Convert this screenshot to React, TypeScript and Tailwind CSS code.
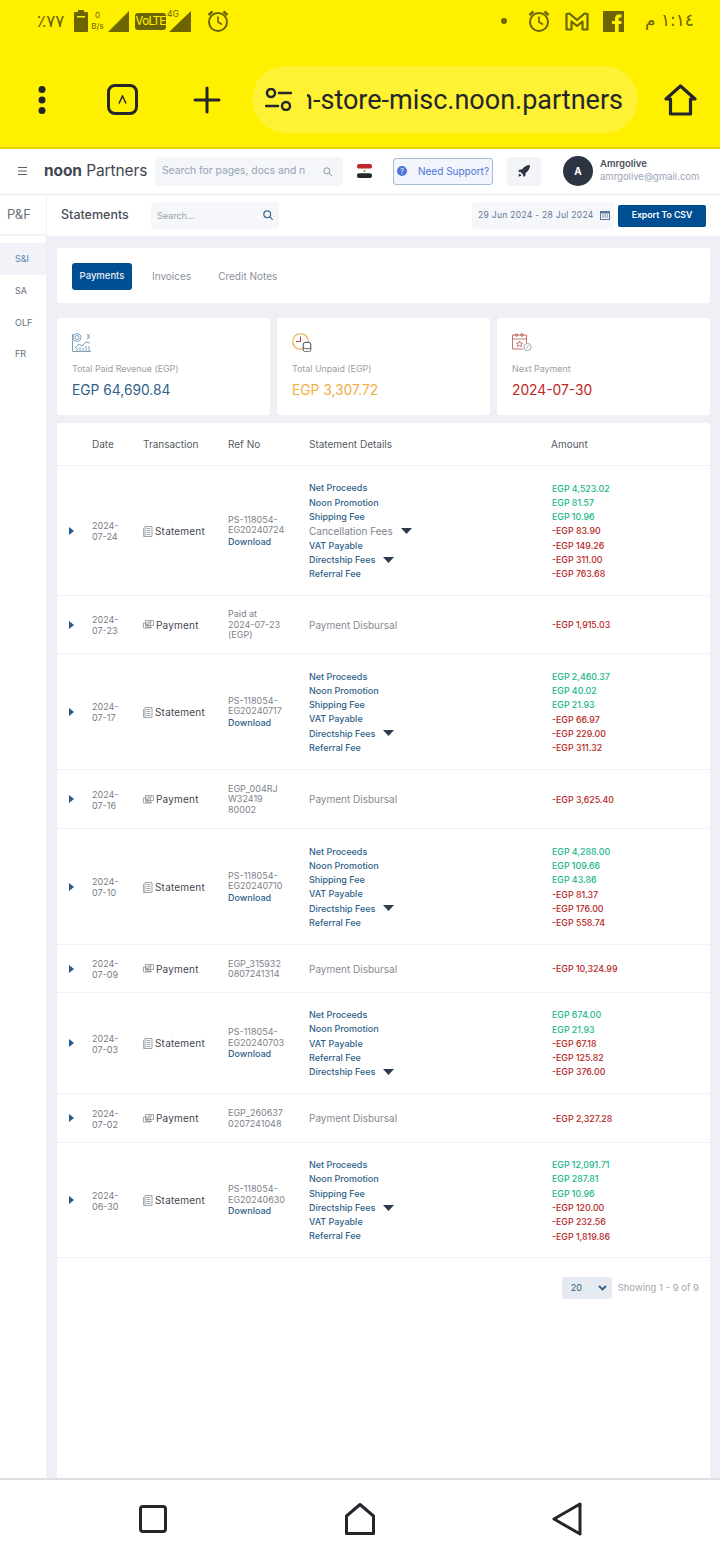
import React from 'react';

type Row = {
  date: [string, string];
  kind: 'Statement' | 'Payment';
  ref: string[];
  download?: boolean;
  details?: [string, boolean?, boolean?][];
  amounts: string[];
  h: string;
};

const rows: Row[] = [
  { date: ['2024-', '07-24'], kind: 'Statement', ref: ['PS-118054-', 'EG20240724'], download: true, h: 'h-[130px]',
    details: [['Net Proceeds'], ['Noon Promotion'], ['Shipping Fee'], ['Cancellation Fees', true, true], ['VAT Payable'], ['Directship Fees', true], ['Referral Fee']],
    amounts: ['EGP 4,523.02', 'EGP 81.57', 'EGP 10.96', '-EGP 83.90', '-EGP 149.26', '-EGP 311.00', '-EGP 763.68'] },
  { date: ['2024-', '07-23'], kind: 'Payment', ref: ['Paid at', '2024-07-23', '(EGP)'], h: 'h-[58px]', amounts: ['-EGP 1,915.03'] },
  { date: ['2024-', '07-17'], kind: 'Statement', ref: ['PS-118054-', 'EG20240717'], download: true, h: 'h-[116px]',
    details: [['Net Proceeds'], ['Noon Promotion'], ['Shipping Fee'], ['VAT Payable'], ['Directship Fees', true], ['Referral Fee']],
    amounts: ['EGP 2,460.37', 'EGP 40.02', 'EGP 21.93', '-EGP 66.97', '-EGP 229.00', '-EGP 311.32'] },
  { date: ['2024-', '07-16'], kind: 'Payment', ref: ['EGP_004RJ', 'W32419', '80002'], h: 'h-[59px]', amounts: ['-EGP 3,625.40'] },
  { date: ['2024-', '07-10'], kind: 'Statement', ref: ['PS-118054-', 'EG20240710'], download: true, h: 'h-[116px]',
    details: [['Net Proceeds'], ['Noon Promotion'], ['Shipping Fee'], ['VAT Payable'], ['Directship Fees', true], ['Referral Fee']],
    amounts: ['EGP 4,288.00', 'EGP 109.66', 'EGP 43.86', '-EGP 81.37', '-EGP 176.00', '-EGP 558.74'] },
  { date: ['2024-', '07-09'], kind: 'Payment', ref: ['EGP_315932', '0807241314'], h: 'h-[48px]', amounts: ['-EGP 10,324.99'] },
  { date: ['2024-', '07-03'], kind: 'Statement', ref: ['PS-118054-', 'EG20240703'], download: true, h: 'h-[101px]',
    details: [['Net Proceeds'], ['Noon Promotion'], ['VAT Payable'], ['Referral Fee'], ['Directship Fees', true]],
    amounts: ['EGP 674.00', 'EGP 21.93', '-EGP 67.18', '-EGP 125.82', '-EGP 376.00'] },
  { date: ['2024-', '07-02'], kind: 'Payment', ref: ['EGP_260637', '0207241048'], h: 'h-[49px]', amounts: ['-EGP 2,327.28'] },
  { date: ['2024-', '06-30'], kind: 'Statement', ref: ['PS-118054-', 'EG20240630'], download: true, h: 'h-[115px]',
    details: [['Net Proceeds'], ['Noon Promotion'], ['Shipping Fee'], ['Directship Fees', true], ['VAT Payable'], ['Referral Fee']],
    amounts: ['EGP 12,091.71', 'EGP 287.81', 'EGP 10.96', '-EGP 120.00', '-EGP 232.56', '-EGP 1,819.86'] },
];

const Caret = () => (
  <svg width="11" height="6" viewBox="0 0 11 6"><path d="M0 0h11L5.5 6z" fill="#2f3a4a" /></svg>
);

const Alarm = () => (
  <svg width="22" height="23" viewBox="0 0 22 23" fill="none" stroke="#6b6400" strokeWidth="2">
    <circle cx="11" cy="13" r="9" />
    <path d="M11 7.500V13l4 2.500" strokeWidth="1.600" />
    <path d="M1.500 6l4-3.500M20.500 6l-4-3.500" strokeWidth="2.400" />
  </svg>
);

const StatementIcon = () => (
  <svg width="10" height="11" viewBox="0 0 10 11" fill="none" stroke="#8a8f98" strokeWidth="0.8">
    <path d="M2 .5h7v10H2zM.6 2v8.500H2M3.500 2.500h4M3.500 4.500h4M3.500 6.500h4M3.500 8.500h4" />
  </svg>
);
const PaymentIcon = () => (
  <svg width="11" height="10" viewBox="0 0 11 10" fill="none" stroke="#8a8f98" strokeWidth="0.8">
    <path d="M2.500.5h8v5h-8zM.5 3h7v5h-7zM2 4.600h4M2 6.200h4M5 2h4M9 7.500H3" />
  </svg>
);

function TableRow({ r }: { r: Row }) {
  return (
    <div className={`grid grid-cols-[35px_51px_85px_81px_242px_1fr] items-center border-b border-[#f1f2f5] pt-[1px] ${r.h}`}>
      <div className="-mt-[1px] pl-[12px]">
        <svg width="5" height="8" viewBox="0 0 5 8"><path d="M0 0l5 4-5 4z" fill="#235a88" /></svg>
      </div>
      <div className="text-[9px] leading-[11px] text-[#767c85]">{r.date[0]}<br />{r.date[1]}</div>
      <div className="flex items-center gap-[2px] text-[10px] tracking-[0.2px] text-[#3f4650]">
        {r.kind === 'Statement' ? <StatementIcon /> : <PaymentIcon />}
        <span>{r.kind}</span>
      </div>
      <div className="text-[9px] leading-[10.500px] text-[#7d838c]">
        {r.ref.map((l) => <div key={l}>{l}</div>)}
        {r.download && <div className="mt-[1px] font-medium text-[#2f5f88]">Download</div>}
      </div>
      <div>
        {r.details ? (
          r.details.map(([t, caret, plain]) => (
            <div key={t} className={`flex h-[14.300px] items-center gap-[8px] ${plain ? 'text-[10px] text-[#7d838c]' : 'text-[9px] font-medium text-[#2f5f88]'}`}>
              <span>{t}</span>
              {caret && <Caret />}
            </div>
          ))
        ) : (
          <div className="text-[10px] text-[#858a92]">Payment Disbursal</div>
        )}
      </div>
      <div>
        {r.amounts.map((a, i) => (
          <div key={i} className={`flex h-[14.300px] items-center pl-[1px] text-[8.800px] font-medium ${a.startsWith('-') ? 'text-[#b3261e]' : 'text-[#16b58a]'}`}>{a}</div>
        ))}
      </div>
    </div>
  );
}

export default function App() {
  return (
    <div className="flex h-[1560px] w-[720px] flex-col overflow-hidden bg-white font-['Inter','Noto_Sans',sans-serif]">
      {/* Android + browser chrome */}
      <div className="flex h-[149px] shrink-0 flex-col border-b-2 border-[#e3d600] bg-[#fff000]">
        <div className="flex h-[42px] items-center pl-[37px] pr-[26px] text-[#6b6400]">
          <span className="w-[37px] font-['DejaVu_Sans',sans-serif] text-[17px] leading-none">٪٧٧</span>
          <svg width="14" height="22" viewBox="0 0 14 22"><path d="M4 0h6v2h3a1 1 0 011 1v18a1 1 0 01-1 1H1a1 1 0 01-1-1V3a1 1 0 011-1h3z" fill="#6b6400" /><rect x="3" y="6" width="8" height="1.500" fill="#fff000" /></svg>
          <div className="ml-[2px] w-[15px] text-center text-[8px] leading-[11px]">0<br />B/s</div>
          <svg className="ml-[3px]" width="21" height="21" viewBox="0 0 21 21"><path d="M21 0v21H0z" fill="#6b6400" /></svg>
          <div className="ml-[6px] h-[17px] w-[31px] overflow-hidden rounded-[3px] bg-[#6b6400] text-center font-['Roboto',sans-serif] text-[12px] tracking-[-0.6px] leading-[17px] text-[#fff000]">VoLTE</div>
          <svg className="ml-[3px]" width="22" height="21" viewBox="0 0 22 21"><path d="M22 0v21H0z" fill="#6b6400" /></svg>
          <span className="-ml-[24px] -mt-[13px] w-[13px] text-[8.500px]">4G</span>
          <span className="ml-[27px] -mt-[2px]"><Alarm /></span>
          <div className="flex-1" />
          <span className="h-[6px] w-[6px] rounded-full bg-[#6b6400]" />
          <span className="ml-[21px] -mt-[2px]"><Alarm /></span>
          <svg className="ml-[15px]" width="24" height="19" viewBox="0 0 24 19" fill="none" stroke="#6b6400" strokeWidth="2.200" strokeLinejoin="round"><path d="M1.500 17.500V2l3-.5L12 8l7.500-6.500 3 .5v15.500h-5V9.500L12 14 6.500 9.500v8z" /></svg>
          <span className="ml-[14px] flex h-[21px] w-[21px] items-end justify-end bg-[#6b6400]">
            <svg width="14" height="19" viewBox="0 0 14 19"><path d="M5 19v-8H2V8h3V5.500C5 3 6.500 1.500 9 1.500h2.500v3H10c-1 0-1.300.5-1.300 1.300V8h3l-.4 3H8.700v8z" fill="#fff000" /></svg>
          </span>
          <span dir="rtl" className="ml-[21px] font-['DejaVu_Sans',sans-serif] text-[17px] tracking-[1px]">١:١٤ م</span>
        </div>
        <div className="flex flex-1 items-center pt-[10px]">
          <svg className="ml-[36px]" width="12" height="30" viewBox="0 0 12 30" fill="#23272b"><circle cx="6" cy="4.500" r="3.500" /><circle cx="6" cy="15" r="3.500" /><circle cx="6" cy="25.500" r="3.500" /></svg>
          <div className="ml-[59px] flex h-[31px] w-[31px] items-center justify-center rounded-[8px] border-[3px] border-[#23272b]">
            <svg width="9" height="9" viewBox="0 0 9 9" fill="none" stroke="#23272b" strokeWidth="1.500"><path d="M1 8.500L4.500 1 8 8.500" /></svg>
          </div>
          <svg className="ml-[55px]" width="28" height="28" viewBox="0 0 28 28" stroke="#23272b" strokeWidth="3" strokeLinecap="round"><path d="M14 2v24M2 14h24" /></svg>
          <div className="ml-[31px] flex h-[67px] w-[386px] items-center rounded-full bg-[#fff133] pl-[13px] pr-[15px]">
            <svg className="shrink-0" width="27" height="23" viewBox="0 0 27 23" fill="none" stroke="#23272b" strokeWidth="2.500" strokeLinecap="round"><circle cx="6" cy="5" r="4" /><path d="M14 5h12M1 18h12" /><circle cx="21" cy="18" r="4" /></svg>
            <div className="ml-[15px] flex flex-1 justify-end overflow-hidden whitespace-nowrap font-['Roboto',sans-serif] text-[27px] leading-[40px] text-[#23272b]">on-store-misc.noon.partners</div>
          </div>
          <svg className="ml-[26px]" width="33" height="32" viewBox="0 0 33 32" fill="none" stroke="#23272b" strokeWidth="3.200" strokeLinejoin="round"><path d="M2 15L16.500 2 31 15h-4.500v15h-20V15z" /></svg>
        </div>
      </div>

      {/* Site header */}
      <div className="flex h-[46px] shrink-0 items-center border-b border-[#e9ebf1] pb-[1px]">
        <svg className="ml-[18px]" width="9" height="8" viewBox="0 0 9 8" stroke="#5a6068"><path d="M0 .5h9M0 4h9M0 7.500h9" /></svg>
        <div className="ml-[17px] w-[104px] whitespace-nowrap text-[15.500px] tracking-[-0.1px] text-[#3f4650]"><span className="font-bold">noon</span> Partners</div>
        <div className="ml-[7px] flex h-[29px] w-[188px] items-center justify-between rounded-[4px] bg-[#f4f6fa] pl-[7px] pr-[11px]">
          <span className="w-[148px] overflow-hidden whitespace-nowrap text-[10.300px] text-[#95a3b5]">Search for pages, docs and n</span>
          <svg width="9" height="9" viewBox="0 0 9 9" fill="none" stroke="#8b97a7"><circle cx="3.800" cy="3.800" r="3" /><path d="M6 6l3 3" /></svg>
        </div>
        <svg className="ml-[14px]" width="15" height="14" viewBox="0 0 15 14"><rect width="15" height="4.700" rx="2" fill="#c0272d" /><rect y="4.700" width="15" height="4.600" fill="#fff" /><rect y="9.300" width="15" height="4.700" rx="2" fill="#23272b" /><circle cx="7.500" cy="7" r="1" fill="#b08a2e" /></svg>
        <div className="ml-[21px] flex h-[27px] w-[100px] items-center rounded-[3px] border border-[#a4bcd6] bg-[#f2f5fb] pl-[3px]">
          <span className="flex h-[10px] w-[10px] items-center justify-center rounded-full bg-[#4c74d9] text-[7px] leading-none text-white">?</span>
          <span className="ml-[11px] whitespace-nowrap text-[10px] text-[#4c74d9]">Need Support?</span>
        </div>
        <div className="ml-[14px] flex h-[29px] w-[34px] items-center justify-center rounded-[3px] bg-[#f2f4f8]">
          <svg width="12" height="12" viewBox="0 0 12 12" fill="#2f3540"><path d="M12 0C8.500 0 6 1.500 4 4.500H1.500L0 6.500l2.500.5L5 9.500l.5 2.500 2-1.500V8C10.500 6 12 3.500 12 0zM1.500 8.500C.800 9.500.500 11 .500 11.500c.5 0 2-.3 3-1z" /></svg>
        </div>
        <div className="ml-[22px] flex h-[30px] w-[30px] items-center justify-center rounded-full bg-[#2c3444] text-[10px] font-bold text-white">A</div>
        <div className="ml-[7px] -mt-[1px] leading-none">
          <div className="text-[9.500px] font-semibold leading-[12px] text-[#4a505a]">Amrgolive</div>
          <div className="text-[9.500px] leading-[14px] text-[#9aa5b5]">amrgolive@gmail.com</div>
        </div>
      </div>

      <div className="flex min-h-0 flex-1">
        {/* Sidebar */}
        <div className="w-[47px] shrink-0 border-r border-[#eef0f5] bg-white">
          <div className="flex h-[41px] items-center border-b-[2px] border-[#f1f3f7] pl-[7px] text-[13px] text-[#6a7079]">P&amp;F</div>
          <div className="mt-[7px] flex h-[32px] items-center bg-[#f1f3f8] pl-[15px] text-[9px] text-[#5e86a8]">S&amp;I</div>
          <div className="flex h-[32px] items-center pl-[15px] text-[9px] text-[#6a7079]">SA</div>
          <div className="flex h-[32px] items-center pl-[15px] text-[9px] text-[#6a7079]">OLF</div>
          <div className="flex h-[30px] items-center pl-[15px] text-[9px] text-[#6a7079]">FR</div>
        </div>

        {/* Content */}
        <div className="flex min-w-0 flex-1 flex-col bg-[#eef0f6]">
          <div className="flex h-[41px] shrink-0 items-center bg-white pl-[14px]">
            <div className="w-[90px] text-[12.500px] font-medium text-[#4a505a]">Statements</div>
            <div className="flex h-[27px] w-[128px] items-center justify-between rounded-[4px] bg-[#f6f7fb] pl-[6px] pr-[6px]">
              <span className="text-[9px] text-[#9aa2ad]">Search...</span>
              <svg className="-mt-[1px]" width="10" height="10" viewBox="0 0 10 10" fill="none" stroke="#3d6a93" strokeWidth="1.200"><circle cx="4.200" cy="4.200" r="3.400" /><path d="M6.800 6.800L9.700 9.700" /></svg>
            </div>
            <div className="ml-[193px] flex h-[27px] w-[142px] items-center justify-between rounded-[4px] bg-[#f6f7fb] pl-[6px] pr-[4px]">
              <span className="whitespace-nowrap text-[8.500px] tracking-[0.3px] text-[#5b7793]">29 Jun 2024 - 28 Jul 2024</span>
              <svg className="-mt-[1px]" width="10" height="10" viewBox="0 0 10 10" fill="#5b7793"><path d="M0 1h10v9H0zM1 3.500v5.500h8V3.500z" fillRule="evenodd" /><path d="M2 4.500h1.500v1H2zM4.300 4.500h1.500v1H4.300zM6.500 4.500H8v1H6.500zM2 6.500h1.500v1H2zM4.300 6.500h1.500v1H4.300zM6.500 6.500H8v1H6.500z" /></svg>
            </div>
            <div className="ml-[4px] flex h-[22px] w-[88px] items-center justify-center rounded-[2px] bg-[#004e92] text-[8.700px] font-semibold text-white">Export To CSV</div>
          </div>

          <div className="flex min-h-0 flex-1 flex-col px-[10px] pt-[12px]">
            {/* Tabs */}
            <div className="flex h-[55px] shrink-0 items-center rounded-[3px] bg-white pl-[15px] pt-[1px]">
              <div className="flex h-[27px] w-[60px] items-center justify-center rounded-[3px] bg-[#004e92] pt-[1px] text-[9.500px] font-medium text-[#e8eef5]">Payments</div>
              <div className="ml-[20px] pt-[1px] text-[10px] text-[#8d929a]">Invoices</div>
              <div className="ml-[27px] pt-[1px] text-[10px] text-[#8d929a]">Credit Notes</div>
            </div>

            {/* Stats */}
            <div className="mt-[15px] grid h-[97px] shrink-0 grid-cols-3 gap-[7px]">
              <div className="rounded-[3px] bg-white pl-[15px] pt-[15px]">
                <svg width="20" height="19" viewBox="0 0 20 19" fill="none" stroke="#5f8aa8" strokeWidth="0.800"><circle cx="5" cy="4.500" r="4" /><circle cx="5" cy="4.500" r="2" /><path d="M.5 1v17.500H19" /><path d="M3 15l4-4 3 2 4-4 4 1" /><path d="M5 18v-3M8 18v-4M11 18v-3M14 18v-5M17 18v-5" /><path d="M15 1l2 2.500-2 2.500M18 1l-2 2.500 2 2.500" /></svg>
                <div className="mt-[10px] text-[8.900px] leading-[14px] text-[#9a9ea5]">Total Paid Revenue (EGP)</div>
                <div className="mt-[4px] text-[13.800px] leading-[20px] text-[#2f5f88]">EGP 64,690.84</div>
              </div>
              <div className="rounded-[3px] bg-white pl-[15px] pt-[15px]">
                <svg width="20" height="19" viewBox="0 0 20 19" fill="none"><circle cx="8.500" cy="8.500" r="7.800" stroke="#e9a93a" strokeWidth="1.100" /><path d="M8.500 3.500v5H4" stroke="#c0392b" strokeWidth="1" /><ellipse cx="15" cy="11" rx="3.800" ry="1.800" fill="#fff" stroke="#4a505a" /><path d="M11.200 11v6c0 1 1.700 1.800 3.800 1.800s3.800-.8 3.800-1.800v-6M11.200 14c0 1 1.700 1.800 3.800 1.800s3.800-.8 3.800-1.800" fill="#fff" stroke="#4a505a" /></svg>
                <div className="mt-[10px] text-[8.900px] leading-[14px] text-[#9a9ea5]">Total Unpaid (EGP)</div>
                <div className="mt-[4px] text-[13.800px] leading-[20px] text-[#efb040]">EGP 3,307.72</div>
              </div>
              <div className="rounded-[3px] bg-white pl-[15px] pt-[15px]">
                <svg width="20" height="19" viewBox="0 0 20 19" fill="none" stroke="#b4534a" strokeWidth="0.800"><path d="M11 16H.5V2h14v8M.5 6h14" /><circle cx="4.500" cy="2" r="1.300" /><circle cx="10" cy="2" r="1.300" /><path d="M7.500 8l1 2 2 .2-1.500 1.300.5 2-2-1-2 1 .5-2-1.500-1.300 2-.2z" /><circle cx="15.500" cy="14" r="3.600" stroke="#8a8f98" /><path d="M14.500 15.500l2-3" stroke="#8a8f98" /></svg>
                <div className="mt-[10px] text-[8.900px] leading-[14px] text-[#9a9ea5]">Next Payment</div>
                <div className="mt-[4px] text-[13.800px] leading-[20px] text-[#c0261f]">2024-07-30</div>
              </div>
            </div>

            {/* Table */}
            <div className="mt-[8px] min-h-0 flex-1 rounded-t-[3px] bg-white">
              <div className="grid h-[43px] grid-cols-[35px_51px_85px_81px_242px_1fr] items-center border-b border-[#f1f2f5] text-[10px] text-[#555b64]">
                <div />
                <div>Date</div>
                <div>Transaction</div>
                <div>Ref No</div>
                <div>Statement Details</div>
                <div>Amount</div>
              </div>
              {rows.map((r) => <TableRow key={r.date[1]} r={r} />)}
              <div className="flex items-center justify-end pr-[11px] pt-[19px]">
                <div className="flex h-[22px] w-[50px] items-center justify-between rounded-[3px] bg-[#e4eaf0] pl-[9px] pr-[5px] text-[9px] text-[#2f5f88]">
                  <span>20</span>
                  <svg width="9" height="6" viewBox="0 0 9 6" fill="none" stroke="#2f5f88" strokeWidth="1.800"><path d="M1 1l3.500 3.500L8 1" /></svg>
                </div>
                <div className="ml-[6px] whitespace-nowrap text-[9.500px] text-[#a3a8af]">Showing 1 - 9 of 9</div>
              </div>
            </div>
          </div>
        </div>
      </div>

      {/* Android nav */}
      <div className="flex h-[82px] shrink-0 items-center border-t-2 border-[#dfdfdf] bg-white pb-[3px]">
        <div className="ml-[139px] h-[28px] w-[28px] rounded-[4px] border-[3px] border-[#23272b]" />
        <svg className="ml-[178px]" width="30" height="32" viewBox="0 0 30 32" fill="none" stroke="#23272b" strokeWidth="3" strokeLinejoin="round"><path d="M1.500 13L15 1.500 28.500 13v17.500h-27z" /></svg>
        <svg className="ml-[177px]" width="30" height="34" viewBox="0 0 30 34" fill="none" stroke="#23272b" strokeWidth="3" strokeLinejoin="round"><path d="M28 2v30L2 17z" /></svg>
      </div>
    </div>
  );
}
